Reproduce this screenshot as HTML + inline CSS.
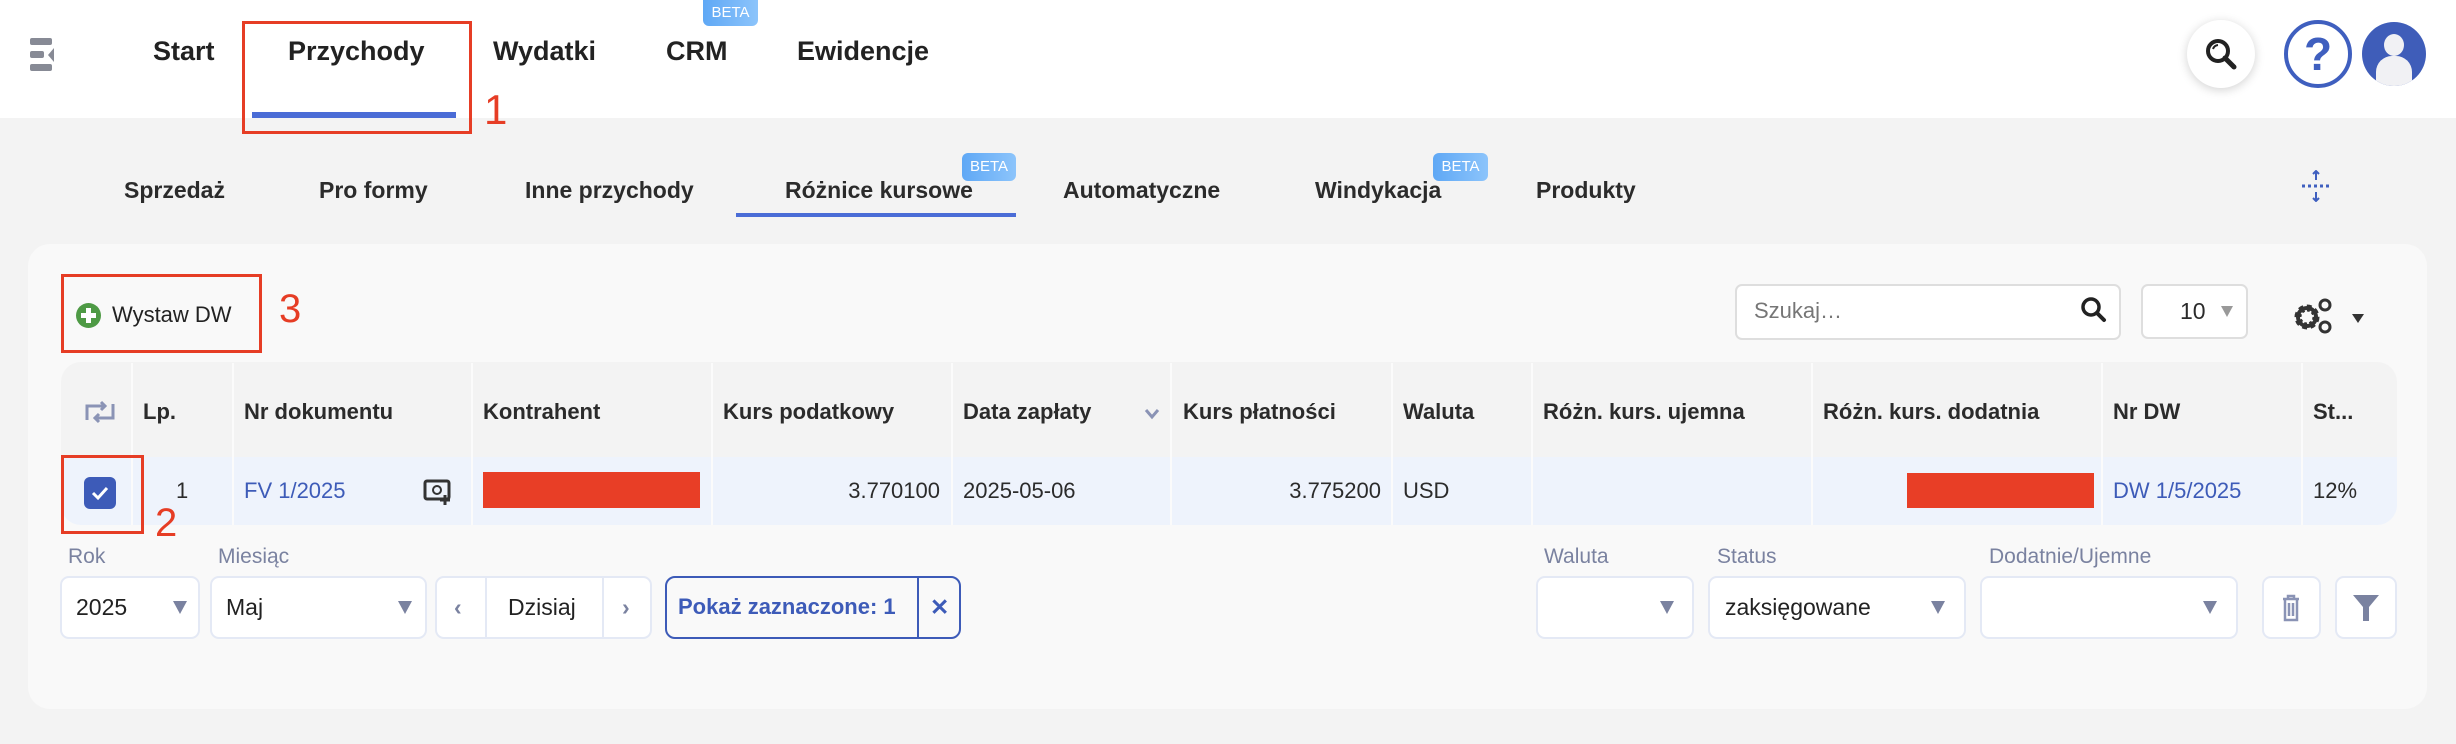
<!DOCTYPE html>
<html><head><meta charset="utf-8"><style>
*{box-sizing:border-box;margin:0;padding:0}
body{width:2456px;height:744px;background:#f3f3f3;font-family:"Liberation Sans",Arial,sans-serif;color:#2b2b2b;position:relative;overflow:hidden}
.a{position:absolute}
.hdr{left:0;top:0;width:2456px;height:118px;background:#fff}
.nav{font-size:27px;font-weight:bold;top:36px;color:#222}
.beta{background:linear-gradient(90deg,#5fa8f5,#8cc4fb);color:#fff;font-size:15px;text-align:center;border-radius:6px}
.sub{font-size:23px;font-weight:bold;top:177px;color:#2b2b2b}
.card{left:28px;top:244px;width:2399px;height:465px;background:#f9f9f9;border-radius:22px}
.th{top:399px;font-size:22px;font-weight:bold;color:#2b2b2b;white-space:nowrap}
.td{top:478px;font-size:22px;color:#2b2b2b;white-space:nowrap}
.vl{top:363px;width:2px;height:162px;background:#fbfbfb}
.lbl{top:545px;font-size:21px;color:#7a82a0}
.inp{top:576px;height:63px;background:#fff;border:2px solid #e4e9f5;border-radius:9px}
.car{width:0;height:0;border-left:7px solid transparent;border-right:7px solid transparent;border-top:13px solid #7a82a0}
.it{top:594px;font-size:23px;color:#222}
.red{border:3px solid #e63d25}
.num{color:#e63d25;font-size:40px}
</style></head><body>
<div class="a hdr"></div>
<!-- hamburger -->
<div class="a" style="left:30px;top:38px;width:22px;height:7px;background:#878a95;border-radius:2px"></div>
<div class="a" style="left:30px;top:51px;width:14px;height:7px;background:#878a95;border-radius:2px"></div>
<div class="a" style="left:30px;top:64px;width:22px;height:7px;background:#878a95;border-radius:2px"></div>
<div class="a" style="left:48px;top:48px;width:0;height:0;border-top:7px solid transparent;border-bottom:7px solid transparent;border-right:6px solid #878a95"></div>

<div class="a nav" style="left:153px">Start</div>
<div class="a nav" style="left:288px">Przychody</div>
<div class="a nav" style="left:493px">Wydatki</div>
<div class="a nav" style="left:666px">CRM</div>
<div class="a nav" style="left:797px">Ewidencje</div>
<div class="a beta" style="left:703px;top:0;width:55px;height:26px;line-height:26px;border-radius:0 0 6px 6px">BETA</div>
<div class="a" style="left:252px;top:112px;width:204px;height:6px;background:#4a6cd6"></div>
<div class="a red" style="left:242px;top:21px;width:230px;height:113px"></div>
<div class="a num" style="left:484px;top:86px;font-size:42px">1</div>

<!-- right icons -->
<div class="a" style="left:2187px;top:20px;width:68px;height:68px;border-radius:50%;background:#fff;box-shadow:0 2px 10px rgba(0,0,0,.18)"></div>
<svg class="a" style="left:2203px;top:36px" width="36" height="36" viewBox="0 0 36 36"><circle cx="15" cy="15" r="10" fill="none" stroke="#222" stroke-width="4"/><path d="M22 22l9 9" stroke="#222" stroke-width="5" stroke-linecap="round"/><path d="M10 13a6 6 0 0 1 5-4" stroke="#222" stroke-width="2" fill="none"/></svg>
<div class="a" style="left:2284px;top:20px;width:68px;height:68px;border-radius:50%;border:4px solid #3f5fbf;background:#fff;color:#3f5fbf;font-size:46px;font-weight:bold;text-align:center;line-height:60px">?</div>
<div class="a" style="left:2362px;top:22px;width:64px;height:64px;border-radius:50%;background:#3f5db9;overflow:hidden">
<div class="a" style="left:22px;top:12px;width:20px;height:22px;border-radius:50%;background:#f1f1f4"></div>
<div class="a" style="left:14px;top:34px;width:36px;height:40px;border-radius:16px 16px 0 0;background:#f1f1f4"></div></div>

<!-- sub nav -->
<div class="a sub" style="left:124px">Sprzedaż</div>
<div class="a sub" style="left:319px">Pro formy</div>
<div class="a sub" style="left:525px">Inne przychody</div>
<div class="a sub" style="left:785px">Różnice kursowe</div>
<div class="a sub" style="left:1063px">Automatyczne</div>
<div class="a sub" style="left:1315px">Windykacja</div>
<div class="a sub" style="left:1536px">Produkty</div>
<div class="a beta" style="left:962px;top:153px;width:54px;height:28px;line-height:28px">BETA</div>
<div class="a beta" style="left:1433px;top:153px;width:55px;height:28px;line-height:28px">BETA</div>
<div class="a" style="left:736px;top:213px;width:280px;height:4px;background:#4a6cd6"></div>
<svg class="a" style="left:2300px;top:170px" width="32" height="32" viewBox="0 0 32 32"><path d="M16 1v9M13 4l3-3 3 3M16 22v9M13 28l3 3 3-3" stroke="#3f5fbf" stroke-width="2" fill="none"/><path d="M2 16h28" stroke="#3f5fbf" stroke-width="3" stroke-dasharray="3 3"/></svg>

<div class="a card"></div>
<!-- Wystaw DW -->
<div class="a" style="left:76px;top:303px;width:25px;height:25px;border-radius:50%;background:#4e9a45"></div>
<div class="a" style="left:86px;top:308px;width:5px;height:15px;background:#fff"></div>
<div class="a" style="left:81px;top:313px;width:15px;height:5px;background:#fff"></div>
<div class="a" style="left:112px;top:302px;font-size:22px;color:#222">Wystaw DW</div>
<div class="a red" style="left:61px;top:274px;width:201px;height:79px"></div>
<div class="a num" style="left:279px;top:287px">3</div>

<div class="a" style="left:1735px;top:284px;width:386px;height:56px;background:#fff;border:2px solid #dedede;border-radius:7px"></div>
<div class="a" style="left:1754px;top:298px;font-size:22px;color:#767676">Szukaj…</div>
<svg class="a" style="left:2080px;top:296px" width="28" height="28" viewBox="0 0 28 28"><circle cx="11" cy="11" r="8" fill="none" stroke="#222" stroke-width="3.5"/><path d="M17 17l7 7" stroke="#222" stroke-width="4" stroke-linecap="round"/></svg>
<div class="a" style="left:2141px;top:284px;width:107px;height:55px;background:#fff;border:2px solid #dedede;border-radius:7px"></div>
<div class="a" style="left:2180px;top:298px;font-size:23px">10</div>
<div class="a" style="left:2221px;top:306px;width:0;height:0;border-left:6px solid transparent;border-right:6px solid transparent;border-top:11px solid #999"></div>
<svg class="a" style="left:2292px;top:295px" width="46" height="40" viewBox="0 0 46 40"><circle cx="15" cy="22" r="9" fill="none" stroke="#333" stroke-width="7" stroke-dasharray="4 3"/><circle cx="15" cy="22" r="9" fill="none" stroke="#333" stroke-width="4"/><circle cx="33" cy="10" r="5" fill="none" stroke="#333" stroke-width="3"/><circle cx="33" cy="32" r="5" fill="none" stroke="#333" stroke-width="3"/></svg>
<div class="a" style="left:2352px;top:314px;width:0;height:0;border-left:6px solid transparent;border-right:6px solid transparent;border-top:9px solid #333"></div>

<!-- table -->
<div class="a" style="left:61px;top:362px;width:2336px;height:96px;background:#f3f3f3;border-radius:20px 20px 0 0"></div>
<div class="a" style="left:61px;top:457px;width:2336px;height:68px;background:#eef3fc;border-radius:0 0 20px 20px"></div>
<div class="a vl" style="left:131px"></div><div class="a vl" style="left:232px"></div><div class="a vl" style="left:471px"></div><div class="a vl" style="left:711px"></div><div class="a vl" style="left:951px"></div><div class="a vl" style="left:1170px"></div><div class="a vl" style="left:1391px"></div><div class="a vl" style="left:1531px"></div><div class="a vl" style="left:1811px"></div><div class="a vl" style="left:2101px"></div><div class="a vl" style="left:2301px"></div>
<svg class="a" style="left:84px;top:400px" width="32" height="24" viewBox="0 0 32 24"><path d="M3 20V6h18M17 2l4 4-4 4M29 4v14H11M15 22l-4-4 4-4" stroke="#8a93b5" stroke-width="3" fill="none"/></svg>
<div class="a th" style="left:143px">Lp.</div>
<div class="a th" style="left:244px">Nr dokumentu</div>
<div class="a th" style="left:483px">Kontrahent</div>
<div class="a th" style="left:723px">Kurs podatkowy</div>
<div class="a th" style="left:963px">Data zapłaty</div>
<svg class="a" style="left:1144px;top:408px" width="16" height="12" viewBox="0 0 16 12"><path d="M2 2l6 7 6-7" stroke="#8a93b5" stroke-width="3" fill="none"/></svg>
<div class="a th" style="left:1183px">Kurs płatności</div>
<div class="a th" style="left:1403px">Waluta</div>
<div class="a th" style="left:1543px">Różn. kurs. ujemna</div>
<div class="a th" style="left:1823px">Różn. kurs. dodatnia</div>
<div class="a th" style="left:2113px">Nr DW</div>
<div class="a th" style="left:2313px">St...</div>

<div class="a" style="left:84px;top:477px;width:32px;height:32px;background:#3d5bb8;border-radius:6px"></div>
<svg class="a" style="left:90px;top:483px" width="20" height="20" viewBox="0 0 20 20"><path d="M3 10l5 5 9-10" stroke="#fff" stroke-width="3" fill="none"/></svg>
<div class="a red" style="left:61px;top:455px;width:83px;height:79px"></div>
<div class="a num" style="left:155px;top:501px">2</div>
<div class="a td" style="left:176px">1</div>
<div class="a td" style="left:244px;color:#3d5bb8">FV 1/2025</div>
<svg class="a" style="left:423px;top:479px" width="30" height="28" viewBox="0 0 30 28"><rect x="2" y="2" width="24" height="18" rx="2" fill="none" stroke="#333" stroke-width="3"/><circle cx="14" cy="11" r="4" fill="none" stroke="#333" stroke-width="2"/><path d="M22 16v10M17 21h10" stroke="#333" stroke-width="3"/></svg>
<div class="a" style="left:483px;top:472px;width:217px;height:36px;background:#e83e26"></div>
<div class="a td" style="left:700px;width:240px;text-align:right">3.770100</div>
<div class="a td" style="left:963px">2025-05-06</div>
<div class="a td" style="left:1180px;width:201px;text-align:right">3.775200</div>
<div class="a td" style="left:1403px">USD</div>
<div class="a" style="left:1907px;top:473px;width:187px;height:35px;background:#e83e26"></div>
<div class="a td" style="left:2113px;color:#3d5bb8">DW 1/5/2025</div>
<div class="a td" style="left:2313px">12%</div>

<!-- filters -->
<div class="a lbl" style="left:68px">Rok</div>
<div class="a lbl" style="left:218px">Miesiąc</div>
<div class="a lbl" style="left:1544px">Waluta</div>
<div class="a lbl" style="left:1717px">Status</div>
<div class="a lbl" style="left:1989px">Dodatnie/Ujemne</div>

<div class="a inp" style="left:60px;width:140px"></div>
<div class="a it" style="left:76px">2025</div>
<div class="a car" style="left:173px;top:601px"></div>
<div class="a inp" style="left:210px;width:217px"></div>
<div class="a it" style="left:226px">Maj</div>
<div class="a car" style="left:398px;top:601px"></div>
<div class="a inp" style="left:435px;width:217px"></div>
<div class="a" style="left:485px;top:578px;width:2px;height:59px;background:#e4e9f5"></div>
<div class="a" style="left:602px;top:578px;width:2px;height:59px;background:#e4e9f5"></div>
<div class="a it" style="left:454px;color:#7a82a0;font-weight:bold">‹</div>
<div class="a it" style="left:508px">Dzisiaj</div>
<div class="a it" style="left:622px;color:#7a82a0;font-weight:bold">›</div>
<div class="a" style="left:665px;top:576px;width:296px;height:63px;border:2px solid #3d5bb8;border-radius:10px;background:#f9f9f9"></div>
<div class="a" style="left:917px;top:578px;width:2px;height:59px;background:#3d5bb8"></div>
<div class="a it" style="left:678px;color:#3d5bb8;font-weight:bold;font-size:22px">Pokaż zaznaczone: 1</div>
<div class="a it" style="left:930px;color:#3d5bb8;font-weight:bold">✕</div>

<div class="a inp" style="left:1536px;width:158px"></div>
<div class="a car" style="left:1660px;top:601px"></div>
<div class="a inp" style="left:1708px;width:258px"></div>
<div class="a it" style="left:1725px">zaksięgowane</div>
<div class="a car" style="left:1931px;top:601px"></div>
<div class="a inp" style="left:1980px;width:258px"></div>
<div class="a car" style="left:2203px;top:601px"></div>
<div class="a inp" style="left:2262px;width:59px"></div>
<svg class="a" style="left:2280px;top:593px" width="22" height="30" viewBox="0 0 22 30"><path d="M3 6h16M8 6V3h6v3M5 6v21h12V6M9 10v13M13 10v13" stroke="#8a93b5" stroke-width="2.5" fill="none"/></svg>
<div class="a inp" style="left:2335px;width:62px"></div>
<svg class="a" style="left:2352px;top:594px" width="28" height="28" viewBox="0 0 28 28"><path d="M1 1h26L17 13v14h-6V13z" fill="#7a82a0"/></svg>
</body></html>
